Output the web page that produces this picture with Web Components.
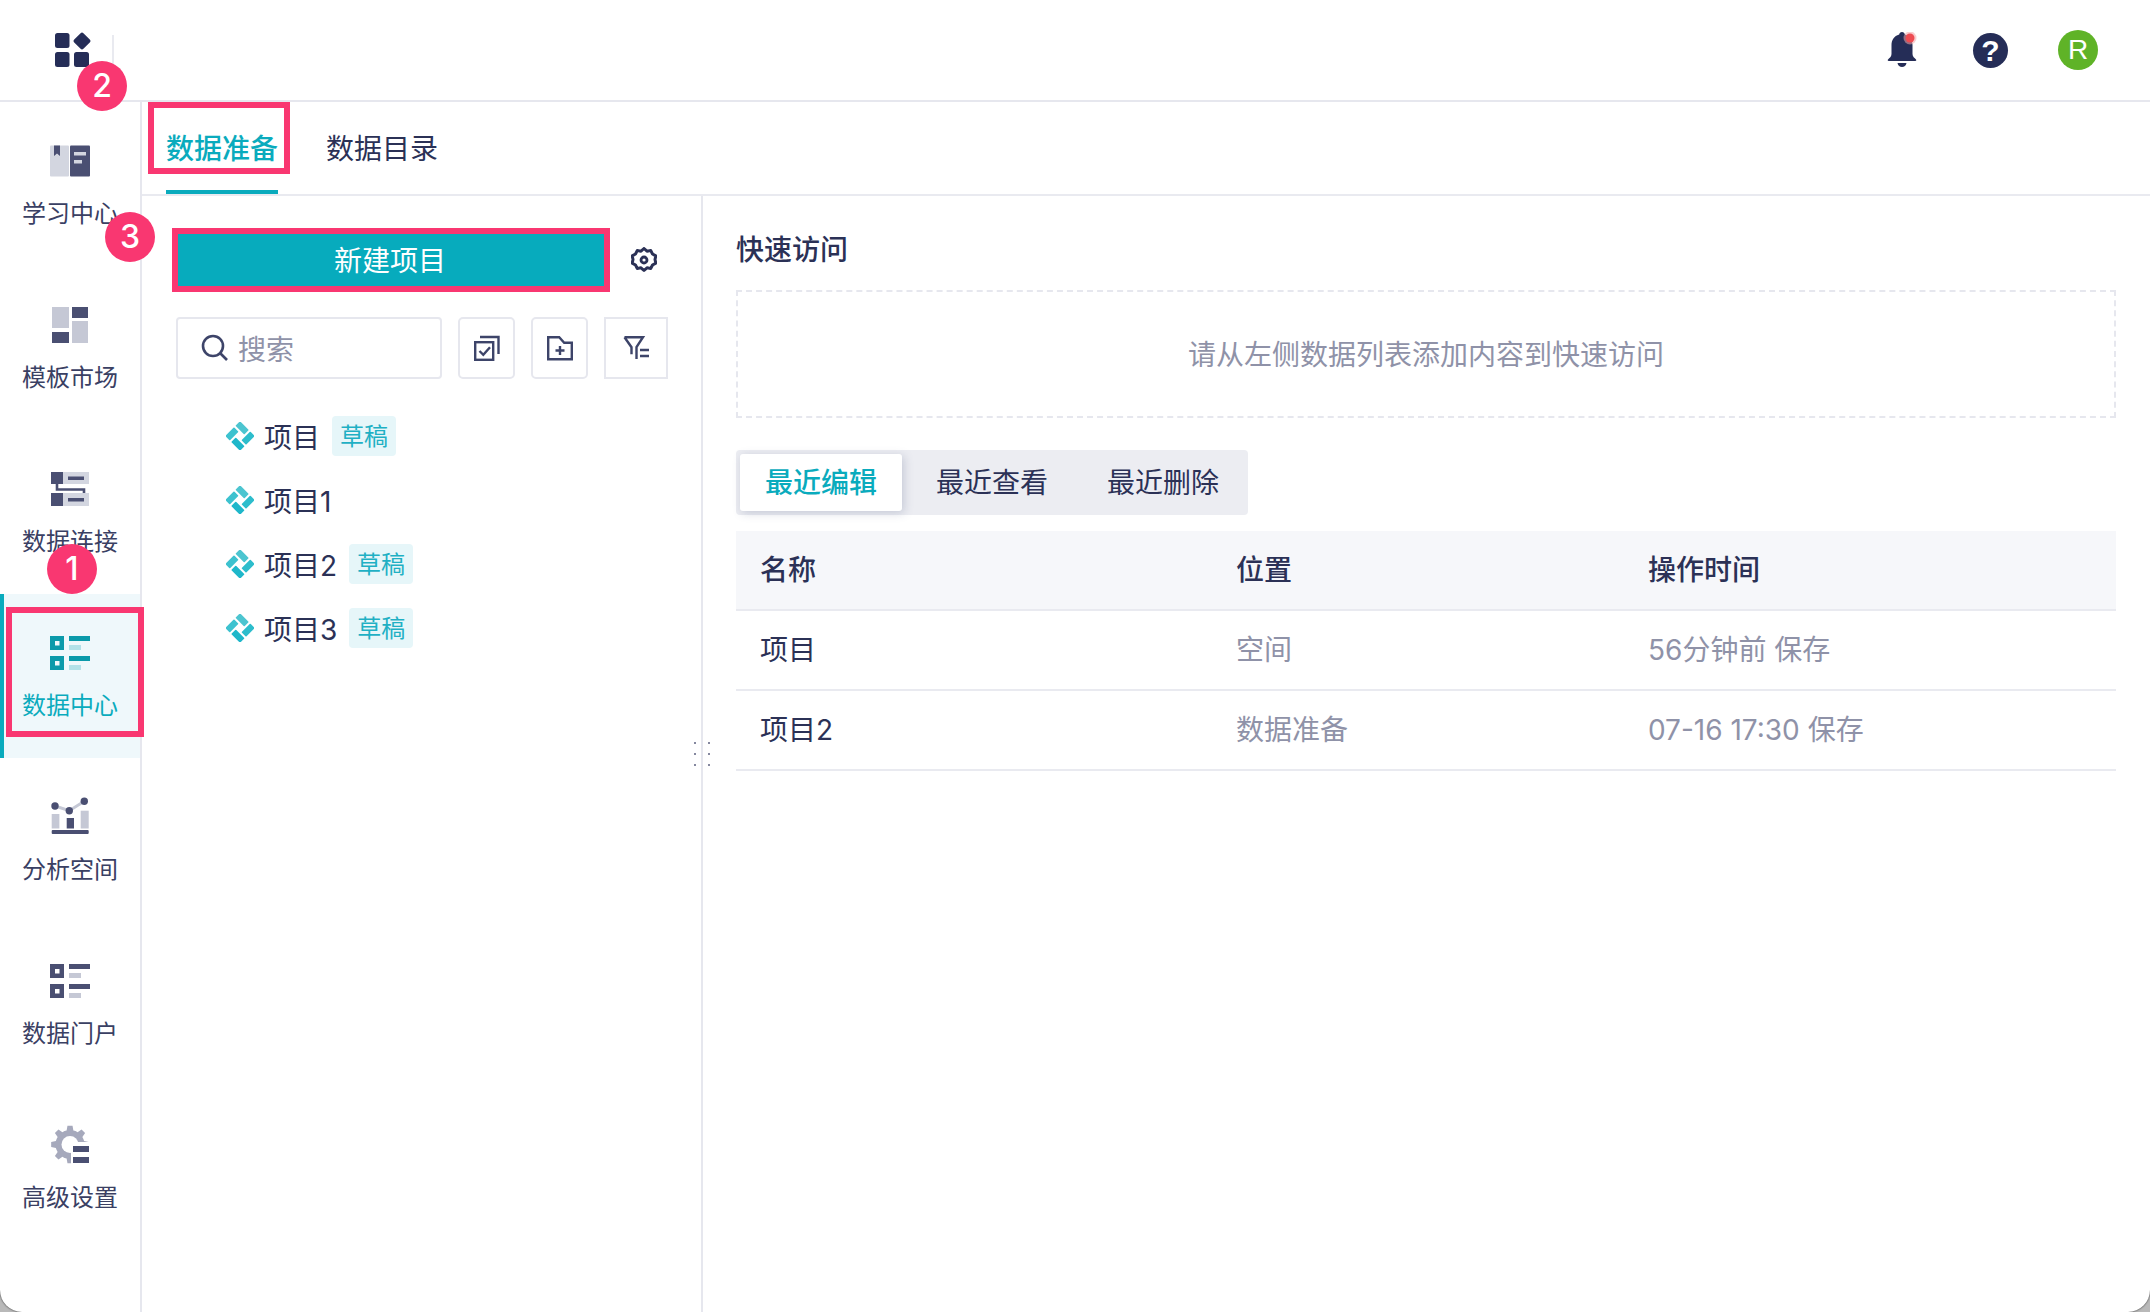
<!DOCTYPE html>
<html lang="zh">
<head>
<meta charset="utf-8">
<title>数据中心</title>
<style>
  html, body { margin: 0; height: 100%; background: #b9b9b9; }
  body { font-family: Inter, "Noto Sans CJK SC", sans-serif; color: #2b3156; }
</style>
</head>
<body>
<app-shell>
  <app-header></app-header>
  <side-rail>
    <rail-item icon="book" label="学习中心"></rail-item>
    <rail-item icon="template" label="模板市场"></rail-item>
    <rail-item icon="link" label="数据连接"></rail-item>
    <rail-item icon="data" label="数据中心" active></rail-item>
    <rail-item icon="chart" label="分析空间"></rail-item>
    <rail-item icon="data" label="数据门户"></rail-item>
    <rail-item icon="setting" label="高级设置"></rail-item>
  </side-rail>
  <data-main>
    <data-tabs></data-tabs>
    <div class="split">
      <project-panel>
        <project-row name="项目" draft></project-row>
        <project-row name="项目1"></project-row>
        <project-row name="项目2" draft></project-row>
        <project-row name="项目3" draft></project-row>
      </project-panel>
      <quick-panel></quick-panel>
    </div>
  </data-main>

  <!-- annotations on top of the screenshot -->
  <mark-box style="left:148px;top:102px;width:142px;height:72px"></mark-box>
  <mark-box style="left:172px;top:228px;width:438px;height:64px"></mark-box>
  <mark-box style="left:6px;top:607px;width:138px;height:130px"></mark-box>
  <pin-badge style="left:77px;top:61px">2</pin-badge>
  <pin-badge style="left:105px;top:212px">3</pin-badge>
  <pin-badge style="left:47px;top:544px">1</pin-badge>
</app-shell>

<script>
// gear outline, used by the settings icons
function gearPath(cx, cy, ro, ri, n) {
  let d = '';
  const step = Math.PI * 2 / n;
  for (let i = 0; i < n; i++) {
    const a = i * step - Math.PI / 2;
    const pts = [
      [ri, a - step * 0.5], [ri, a - step * 0.3],
      [ro, a - step * 0.17], [ro, a + step * 0.17],
      [ri, a + step * 0.3]
    ];
    pts.forEach((p, j) => {
      const x = (cx + p[0] * Math.cos(p[1])).toFixed(2);
      const y = (cy + p[0] * Math.sin(p[1])).toFixed(2);
      d += (i === 0 && j === 0 ? 'M' : 'L') + x + ' ' + y;
    });
  }
  return d + 'Z';
}

function dataIcon(dark, light) {
  return `
    <path fill="${dark}" fill-rule="evenodd" d="M0 3h14v14H0zM5 8v4.5h4.5V8zM0 23h14v14H0zM5 28v4.5h4.5V28z"/>
    <rect x="19" y="3" width="21" height="5" fill="${dark}"/>
    <rect x="19" y="12" width="12" height="5" fill="${light}"/>
    <rect x="19" y="23" width="21" height="5" fill="${dark}"/>
    <rect x="19" y="32" width="12" height="5" fill="${light}"/>`;
}

const DARK = '#4a4f72', LIGHT = '#c5c8d5';
const railIcons = {
  book: () => `
    <rect x="0" y="4.5" width="19" height="31" rx="1" fill="#d3d6e0"/>
    <path d="M4 4.5h6V15l-3-2.4L4 15z" fill="${DARK}"/>
    <rect x="20" y="4.5" width="20" height="31" rx="1" fill="${DARK}"/>
    <rect x="24" y="11" width="12" height="3.5" fill="#d3d6e0"/>
    <rect x="24" y="19" width="8" height="3.5" fill="#d3d6e0"/>`,
  template: () => `
    <rect x="2" y="2" width="17" height="21" fill="${LIGHT}"/>
    <rect x="22" y="2" width="16" height="11" fill="${DARK}"/>
    <rect x="22" y="16" width="16" height="22" fill="${LIGHT}"/>
    <rect x="2" y="27" width="17" height="11" fill="${DARK}"/>`,
  link: () => `
    <rect x="13" y="3" width="26" height="12" fill="#d3d6e0"/>
    <rect x="1" y="3" width="12" height="12" fill="${DARK}"/>
    <rect x="18" y="7.5" width="16" height="3.5" fill="${DARK}"/>
    <rect x="13" y="24" width="26" height="13" fill="#d3d6e0"/>
    <rect x="1" y="24" width="12" height="13" fill="${DARK}"/>
    <rect x="18" y="29" width="16" height="3.5" fill="${DARK}"/>
    <path d="M7 15v5.5h27V24" fill="none" stroke="${DARK}" stroke-width="2.6"/>`,
  data: (active) => active ? dataIcon('#0b9aaa', '#b3e1e8') : dataIcon(DARK, LIGHT),
  chart: () => `
    <path d="M5 9l14.3 4.7L34.3 4.3" fill="none" stroke="${LIGHT}" stroke-width="3"/>
    <circle cx="5" cy="9" r="3.7" fill="${DARK}"/>
    <circle cx="19.3" cy="13.7" r="3.7" fill="${DARK}"/>
    <circle cx="34.3" cy="4.3" r="3.7" fill="${DARK}"/>
    <rect x="1.7" y="17" width="7.7" height="14.5" fill="${LIGHT}"/>
    <rect x="16.7" y="21" width="7.3" height="10.5" fill="${DARK}"/>
    <rect x="30.7" y="13.7" width="8" height="17.8" fill="${LIGHT}"/>
    <rect x="1.7" y="33" width="37" height="4" rx="1" fill="${DARK}"/>`,
  setting: () => `
    <path fill="#a6a9bc" d="${gearPath(20, 19.5, 19, 14.5, 8)}"/>
    <circle cx="20" cy="19.5" r="8.5" fill="#fff"/>
    <rect x="21" y="17" width="19" height="23" fill="#fff"/>
    <rect x="23" y="21" width="16" height="6" fill="${DARK}"/>
    <rect x="23" y="32" width="16" height="6" fill="${DARK}"/>`
};

// page frame, bottom corners are rounded like the window in the capture
class AppShell extends HTMLElement {
  constructor() {
    super();
    this.attachShadow({ mode: 'open' });
    this.shadowRoot.innerHTML = `
      <style>
        :host {
          display: grid;
          grid-template-columns: 142px 1fr;
          grid-template-rows: 102px 1fr;
          position: relative;
          height: 1312px;
          overflow: hidden;
          background: #fff;
          border-radius: 0 0 22px 22px;
          box-shadow: 0 0 2px #222;
        }
        ::slotted(app-header) { grid-column: 1 / 3; }
      </style>
      <slot></slot>`;
  }
}

class AppHeader extends HTMLElement {
  constructor() {
    super();
    this.attachShadow({ mode: 'open' });
    this.shadowRoot.innerHTML = `
      <style>
        :host {
          display: flex;
          align-items: center;
          box-sizing: border-box;
          height: 102px;
          border-bottom: 2px solid #e6e7ee;
          padding: 0 52px 0 55px;
        }
        .logo { width: 36px; height: 36px; display: block; }
        .sep { width: 2px; height: 30px; background: #e9eaf0; margin-left: 21px; }
        .tools { margin-left: auto; display: flex; align-items: center; }
        .bell { width: 30px; height: 36px; display: block; }
        .help {
          width: 35px; height: 35px; border-radius: 50%;
          margin-left: 56px;
          background: #252d57; color: #fff;
          font: bold 30px/35px "Liberation Sans", sans-serif;
          text-align: center;
        }
        .avatar {
          width: 40px; height: 40px; border-radius: 50%;
          margin-left: 50px;
          background: #5fb327; color: #fff;
          font: 28px/40px "Liberation Sans", sans-serif;
          text-align: center;
        }
      </style>
      <svg class="logo" viewBox="0 0 36 36">
        <rect x="0" y="1" width="14.5" height="15" rx="2.5" fill="#252d57"/>
        <rect x="0" y="20" width="14.5" height="15" rx="2.5" fill="#252d57"/>
        <rect x="19" y="20" width="15" height="15" rx="2.5" fill="#252d57"/>
        <rect x="20.5" y="2.5" width="13" height="13" rx="2" transform="rotate(45 27 9)" fill="#252d57"/>
      </svg>
      <div class="sep"></div>
      <div class="tools">
        <svg class="bell" viewBox="0 0 30 36">
          <path fill="#252d57" d="M15 0c1.6 0 2.6 1 2.8 2.4C23 3.800 25.500 8 25.500 13v9c0 2.500 2 4 3.500 5.500.6.700.2 1.500-.7 1.500H1.700c-.9 0-1.300-.8-.7-1.500C2.500 26 4.500 24.500 4.500 22v-9c0-5 2.500-9.200 7.700-10.600C12.400 1 13.400 0 15 0z"/>
          <path fill="#252d57" d="M10.500 31h9c-.4 2.600-2.300 4-4.500 4s-4.100-1.400-4.500-4z"/>
          <circle cx="23" cy="6" r="6.500" fill="#f4a6a8" opacity=".55"/>
          <circle cx="23" cy="6" r="4.500" fill="#ee4c52"/>
        </svg>
        <div class="help">?</div>
        <div class="avatar">R</div>
      </div>`;
  }
}

class SideRail extends HTMLElement {
  constructor() {
    super();
    this.attachShadow({ mode: 'open' });
    this.shadowRoot.innerHTML = `
      <style>
        :host {
          display: block;
          box-sizing: border-box;
          width: 142px;
          border-right: 2px solid #e6e7ee;
        }
      </style>
      <slot></slot>`;
  }
}

class RailItem extends HTMLElement {
  connectedCallback() {
    const active = this.hasAttribute('active');
    const icon = railIcons[this.getAttribute('icon')](active);
    const root = this.shadowRoot || this.attachShadow({ mode: 'open' });
    root.innerHTML = `
      <style>
        :host {
          display: flex;
          flex-direction: column;
          align-items: center;
          box-sizing: border-box;
          height: 164px;
          padding-top: 39px;
          gap: 16px;
          font-size: 24px;
          line-height: 34px;
          color: #3a4063;
        }
        :host([active]) {
          background: #eff8fb;
          color: #0aabbd;
          box-shadow: inset 4px 0 0 #0aabbd;
        }
        svg { width: 40px; height: 40px; display: block; }
      </style>
      <svg viewBox="0 0 40 40">${icon}</svg>
      <span>${this.getAttribute('label')}</span>`;
  }
}

class DataMain extends HTMLElement {
  constructor() {
    super();
    this.attachShadow({ mode: 'open' });
    this.shadowRoot.innerHTML = `
      <style>
        :host { display: flex; flex-direction: column; min-width: 0; }
        ::slotted(.split) { flex: 1; display: flex; min-height: 0; }
      </style>
      <slot></slot>`;
  }
}

class DataTabs extends HTMLElement {
  constructor() {
    super();
    this.attachShadow({ mode: 'open' });
    this.shadowRoot.innerHTML = `
      <style>
        :host {
          display: flex;
          gap: 48px;
          box-sizing: border-box;
          height: 94px;
          padding-left: 24px;
          border-bottom: 2px solid #e9eaf0;
          font-size: 28px;
        }
        div {
          box-sizing: border-box;
          height: 92px;
          padding-top: 4px;
          line-height: 87px;
          border-bottom: 4px solid transparent;
        }
        .on { color: #0aabbd; border-bottom-color: #0aabbd; font-weight: 500; }
      </style>
      <div class="on">数据准备</div>
      <div>数据目录</div>`;
  }
}

class ProjectPanel extends HTMLElement {
  constructor() {
    super();
    this.attachShadow({ mode: 'open' });
    this.shadowRoot.innerHTML = `
      <style>
        :host {
          display: block;
          position: relative;
          box-sizing: border-box;
          width: 561px;
          flex: none;
          padding: 36px 0 0 34px;
          border-right: 2px solid #e6e7ee;
        }
        .top { display: flex; align-items: center; }
        .new {
          width: 428px; height: 56px;
          background: #07abbd; color: #fff;
          font-size: 28px; line-height: 58px;
          text-align: center;
        }
        .gear { width: 26px; height: 26px; margin-left: 27px; display: block; }
        .tools { display: flex; margin: 29px 0 25px; }
        .search {
          box-sizing: border-box;
          display: flex; align-items: center;
          width: 266px; height: 62px;
          padding-left: 23px;
          border: 2px solid #e6e7ee; border-radius: 4px;
          color: #8f92a8; font-size: 28px;
        }
        .search svg { width: 28px; height: 28px; margin-right: 9px; flex: none; }
        .btn {
          box-sizing: border-box;
          display: flex; align-items: center; justify-content: center;
          width: 57px; height: 62px;
          margin-left: 16px;
          border: 2px solid #e6e7ee; border-radius: 5px;
        }
        .btn.flat { width: 64px; margin-left: 16px; border-radius: 0; }
        .btn svg { width: 26px; height: 26px; display: block; fill: none; stroke: #3d4469; stroke-width: 2.4; }
        .dots {
          position: absolute;
          right: -9px; top: 546px;
          display: grid;
          grid-template-columns: 2px 2px;
          column-gap: 12px;
          row-gap: 9px;
        }
        .dots i { width: 2px; height: 2px; background: #85889f; }
      </style>
      <div class="top">
        <div class="new">新建项目</div>
        <svg class="gear" viewBox="0 0 26 26">
          <path fill="none" stroke="#2b3156" stroke-width="3" stroke-linejoin="round" d="M13 1.500l3 2.700 3.800-.6 1.700 3.400 3.300 1.900-.8 3.600.8 3.600-3.300 1.900-1.700 3.400-3.800-.6-3 2.700-3-2.700-3.800.6-1.700-3.400L1.200 16.100l.8-3.600-.8-3.600 3.300-1.900 1.700-3.400 3.800.6z"/>
          <circle cx="13" cy="13" r="3" fill="none" stroke="#2b3156" stroke-width="2.800"/>
        </svg>
      </div>
      <div class="tools">
        <div class="search">
          <svg viewBox="0 0 28 28" fill="none" stroke="#3d4469" stroke-width="2.6">
            <circle cx="12" cy="12" r="10"/><path d="M19.500 19.500l6.500 6.500"/>
          </svg>
          <span>搜索</span>
        </div>
        <div class="btn">
          <svg viewBox="0 0 26 26">
            <rect x="1.200" y="7.200" width="18" height="17.600"/>
            <path d="M6 2h18.500v17"/>
            <path d="M5.500 16l3.800 3.800 6.700-7.500"/>
          </svg>
        </div>
        <div class="btn">
          <svg viewBox="0 0 26 26">
            <path d="M1.200 2.200h11l5 5.500h7.600v16.500H1.200z"/>
            <path d="M8.500 15.500h9M13 11v9"/>
          </svg>
        </div>
        <div class="btn flat">
          <svg viewBox="0 0 26 26">
            <path d="M1.500 2.200h18.500l-6.500 10V24M1.500 2.200l7 10v7"/>
            <path d="M17 15h9M17 21h9"/>
          </svg>
        </div>
      </div>
      <slot></slot>
      <div class="dots"><i></i><i></i><i></i><i></i><i></i><i></i></div>`;
  }
}

class ProjectRow extends HTMLElement {
  connectedCallback() {
    const root = this.shadowRoot || this.attachShadow({ mode: 'open' });
    const draft = this.hasAttribute('draft') ? '<span class="tag">草稿</span>' : '';
    root.innerHTML = `
      <style>
        :host {
          display: flex;
          align-items: center;
          height: 64px;
          padding-left: 50px;
          font-size: 28px;
        }
        svg { width: 28px; height: 28px; margin-right: 10px; flex: none; }
        .tag {
          margin-left: 12px;
          padding: 0 8px;
          height: 40px;
          line-height: 42px;
          font-size: 24px;
          color: #1fb0c4;
          background: #e6f6f9;
          border-radius: 4px;
        }
      </style>
      <svg viewBox="0 0 28 28">
        <g transform="rotate(45 14 14)">
          <rect x="3.500" y="3.500" width="12.500" height="6.500" rx=".8" fill="#4cc5d0"/>
          <rect x="18" y="3.500" width="6.500" height="12.500" rx=".8" fill="#2dbdcc"/>
          <rect x="12" y="18" width="12.500" height="6.500" rx=".8" fill="#1fb7ca"/>
          <rect x="3.500" y="12" width="6.500" height="12.500" rx=".8" fill="#3dc2cf"/>
        </g>
      </svg>
      <span>${this.getAttribute('name')}</span>${draft}`;
  }
}

class QuickPanel extends HTMLElement {
  constructor() {
    super();
    this.attachShadow({ mode: 'open' });
    const rows = [
      ['项目', '空间', '56分钟前 保存'],
      ['项目2', '数据准备', '07-16 17:30 保存']
    ];
    this.shadowRoot.innerHTML = `
      <style>
        :host {
          display: block;
          flex: 1;
          min-width: 0;
          padding: 36px 34px 0 33px;
          font-size: 28px;
        }
        h2 { margin: 0 0 22px; font-size: 28px; font-weight: 500; line-height: 36px; }
        .drop {
          box-sizing: border-box;
          height: 128px;
          padding-bottom: 2px;
          border: 2px dashed #e6e7ee;
          display: flex; align-items: center; justify-content: center;
          color: #8f92a8;
        }
        .seg {
          display: inline-flex;
          gap: 9px;
          box-sizing: border-box;
          height: 65px;
          margin: 32px 0 16px;
          padding: 4px 4px;
          background: #ecedf2;
          border-radius: 4px;
          vertical-align: top;
        }
        .seg div { width: 162px; text-align: center; line-height: 59px; }
        .seg .on {
          background: #fff; color: #0aabbd; font-weight: 500;
          border-radius: 3px;
          box-shadow: 2px 2px 10px rgba(80, 90, 130, .25);
        }
        .grid { display: grid; grid-template-columns: 476px 412px 1fr; }
        .grid > div {
          box-sizing: border-box;
          height: 80px;
          padding-left: 24px;
          line-height: 78px;
          border-bottom: 2px solid #e9eaf0;
        }
        .grid .head { background: #f6f7fa; font-weight: 500; }
        .grid .sub { color: #8f92a8; }
      </style>
      <h2>快速访问</h2>
      <div class="drop">请从左侧数据列表添加内容到快速访问</div>
      <div class="seg"><div class="on">最近编辑</div><div>最近查看</div><div>最近删除</div></div>
      <div class="grid">
        <div class="head">名称</div><div class="head">位置</div><div class="head">操作时间</div>
        ${rows.map(r => `<div>${r[0]}</div><div class="sub">${r[1]}</div><div class="sub">${r[2]}</div>`).join('')}
      </div>`;
  }
}

class MarkBox extends HTMLElement {
  constructor() {
    super();
    this.attachShadow({ mode: 'open' });
    this.shadowRoot.innerHTML = `
      <style>
        :host {
          display: block;
          position: absolute;
          box-sizing: border-box;
          border: 6px solid #f93771;
          pointer-events: none;
        }
      </style>`;
  }
}

class PinBadge extends HTMLElement {
  constructor() {
    super();
    this.attachShadow({ mode: 'open' });
    this.shadowRoot.innerHTML = `
      <style>
        :host {
          display: block;
          position: absolute;
          width: 50px; height: 50px;
          border-radius: 50%;
          background: #f93771;
          color: #fff;
          font: 500 32px/50px Inter, "Liberation Sans", sans-serif;
          text-align: center;
        }
      </style>
      <slot></slot>`;
  }
}

customElements.define('app-shell', AppShell);
customElements.define('app-header', AppHeader);
customElements.define('side-rail', SideRail);
customElements.define('rail-item', RailItem);
customElements.define('data-main', DataMain);
customElements.define('data-tabs', DataTabs);
customElements.define('project-panel', ProjectPanel);
customElements.define('project-row', ProjectRow);
customElements.define('quick-panel', QuickPanel);
customElements.define('mark-box', MarkBox);
customElements.define('pin-badge', PinBadge);
</script>
</body>
</html>
